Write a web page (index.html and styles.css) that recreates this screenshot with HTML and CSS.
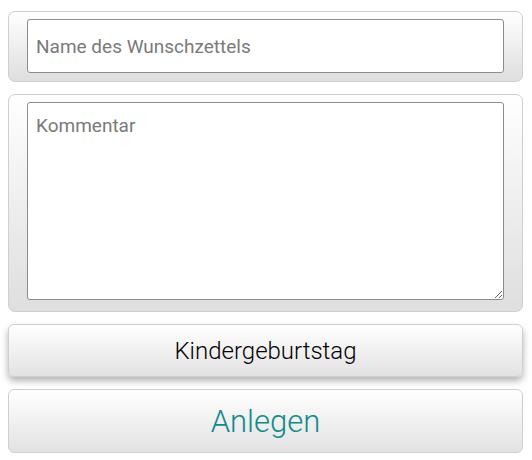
FILE: index.html
```html
<!DOCTYPE html>
<html>
<head>
<meta charset="utf-8">
<link rel="stylesheet" href="styles.css">
</head>
<body>
<div class="page">
  <div class="box box-name">
    <input class="field" type="text" placeholder="Name des Wunschzettels">
  </div>
  <div class="box box-comment">
    <textarea class="field area" placeholder="Kommentar"></textarea>
  </div>
  <button class="btn btn-occasion">Kindergeburtstag</button>
  <button class="btn btn-create">Anlegen</button>
</div>
</body>
</html>
```
FILE: styles.css
```css
* { box-sizing: border-box; }
html, body { margin: 0; padding: 0; background: #fff; }
body { font-family: Roboto, "Noto Sans", sans-serif; }
.page {
  padding: 11px 9px 0 8px;
  display: flex;
  flex-direction: column;
}
.box {
  border: 1px solid #cfcfcf;
  border-radius: 7px;
  background: linear-gradient(#ffffff, #dedede);
  padding: 7px 18px 8px 18px;
}
.box-name { height: 71px; }
.box-comment { margin-top: 12px; height: 218px; }
.field {
  display: block;
  width: 100%;
  border: 1px solid #8d8a96;
  border-radius: 3px;
  background: #fff;
  font-family: Roboto, sans-serif;
  font-size: 19px;
  color: #333;
  padding: 0 8px;
  outline: none;
}
.field::placeholder { color: #7a7a7a; }
.box-name .field { height: 54px; }
.area {
  height: 198px;
  padding-top: 11px;
  resize: vertical;
}
.btn {
  display: block;
  width: 100%;
  border: 1px solid #cfcfcf;
  border-radius: 6px;
  background: linear-gradient(#ffffff, #e2e2e2);
  font-family: Roboto, sans-serif;
  font-weight: 300;
  padding: 0;
}
.btn-occasion {
  margin-top: 12px;
  height: 53px;
  font-size: 24px;
  color: #000;
  box-shadow: 0 4px 7px rgba(0,0,0,0.3);
}
.btn-create {
  margin-top: 12px;
  height: 64px;
  font-size: 31px;
  color: #138a8a;
}
```
